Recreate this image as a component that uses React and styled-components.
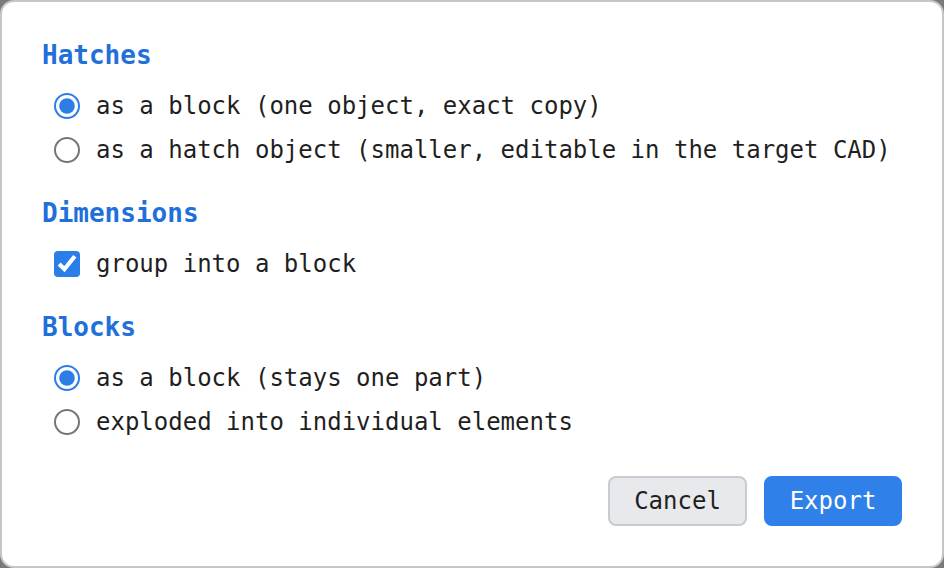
import styled, { createGlobalStyle } from "styled-components";

const GlobalStyle = createGlobalStyle`
  html, body {
    margin: 0;
    padding: 0;
    background: #7a7a7a;
  }
  * {
    box-sizing: border-box;
  }
`;

const sections = [
  {
    title: "Hatches",
    type: "radio",
    name: "hatches",
    options: [
      { label: "as a block (one object, exact copy)", checked: true },
      { label: "as a hatch object (smaller, editable in the target CAD)" },
    ],
  },
  {
    title: "Dimensions",
    type: "checkbox",
    name: "dimensions",
    options: [{ label: "group into a block", checked: true }],
  },
  {
    title: "Blocks",
    type: "radio",
    name: "blocks",
    options: [
      { label: "as a block (stays one part)", checked: true },
      { label: "exploded into individual elements" },
    ],
  },
];

const App = () => {
  return (
    <>
      <GlobalStyle />
      <Dialog>
        {sections.map((section) => (
          <Section key={section.name}>
            <Heading>{section.title}</Heading>
            <Options>
              {section.options.map((option, index) => (
                <Option key={index}>
                  <Input
                    type={section.type}
                    name={section.name}
                    defaultChecked={!!option.checked}
                  />
                  <span>{option.label}</span>
                </Option>
              ))}
            </Options>
          </Section>
        ))}
        <Footer>
          <Button>Cancel</Button>
          <Button primary>Export</Button>
        </Footer>
      </Dialog>
    </>
  );
};

const Dialog = styled.div`
  width: 944px;
  height: 568px;
  display: flex;
  flex-direction: column;
  padding: 38px 40px 40px 40px;
  background: #ffffff;
  border: 2px solid #c3c6cb;
  border-radius: 14px;
  font-family: "DejaVu Sans Mono", "Liberation Mono", monospace;
  color: #1f1f22;
`;

const Section = styled.section`
  display: flex;
  flex-direction: column;
  & + & {
    margin-top: 34px;
  }
`;

const Heading = styled.h2`
  margin: 0;
  font-size: 26px;
  line-height: 30px;
  font-weight: 700;
  color: #1f70d9;
`;

const Options = styled.div`
  display: flex;
  flex-direction: column;
  gap: 16px;
  margin-top: 22px;
`;

const Option = styled.label`
  display: flex;
  align-items: center;
  gap: 16px;
  padding-left: 12px;
  height: 28px;
  font-size: 24px;
  line-height: 28px;
  white-space: nowrap;
`;

const Input = styled.input`
  margin: 0;
  width: 13px;
  height: 13px;
  zoom: 2;
  accent-color: #2b7de8;
  flex-shrink: 0;
`;

const Footer = styled.div`
  margin-top: auto;
  display: flex;
  justify-content: flex-end;
  gap: 17px;
`;

const Button = styled.button`
  width: ${(props) => (props.primary ? "138px" : "139px")};
  height: 50px;
  border-radius: 8px;
  border: 2px solid ${(props) => (props.primary ? "#2f80e8" : "#c8cbd0")};
  background: ${(props) => (props.primary ? "#2f80e8" : "#e8e9ed")};
  color: ${(props) => (props.primary ? "#ffffff" : "#1f1f22")};
  font-family: "DejaVu Sans Mono", "Liberation Mono", monospace;
  font-size: 24px;
  line-height: 28px;
  padding: 0;
`;

export default App;
